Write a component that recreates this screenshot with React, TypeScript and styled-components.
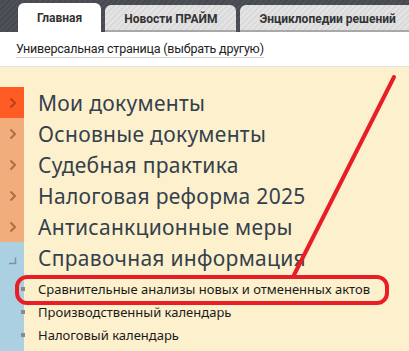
import React from 'react';
import styled, { createGlobalStyle } from 'styled-components';

const GlobalStyle = createGlobalStyle`
  html, body {
    margin: 0;
    padding: 0;
    height: 100%;
  }
  body {
    font-family: Roboto, "Noto Sans", sans-serif;
    background: #fdf0cc;
  }
  #root {
    min-height: 100%;
    display: flex;
    flex-direction: column;
  }
`;

const Page = styled.div`
  position: relative;
  flex: 1;
  display: flex;
  flex-direction: column;
  min-height: 351px;
  overflow: hidden;
`;

const TabBar = styled.div`
  height: 32px;
  display: flex;
  align-items: flex-end;
  gap: 4px;
  padding-left: 18px;
  background: repeating-linear-gradient(
    135deg,
    #4e5258 0px,
    #4e5258 2px,
    #464a50 2px,
    #464a50 4px
  );
  white-space: nowrap;
`;

const Tab = styled.div<{ active?: boolean }>`
  flex-shrink: 0;
  height: ${p => (p.active ? '29px' : '27px')};
  box-sizing: border-box;
  padding: 0 19px;
  display: flex;
  align-items: center;
  border-radius: 6px 6px 0 0;
  font-family: Roboto, sans-serif;
  font-weight: 700;
  font-size: 12px;
  color: #333;
  background: ${p =>
    p.active
      ? '#ffffff'
      : 'repeating-linear-gradient(135deg, #e4e4e4 0px, #e4e4e4 2px, #dadada 2px, #dadada 4px)'};
  box-shadow: ${p => (p.active ? 'none' : 'inset 0 -2px 0 #a8a8a8')};

  &:last-child {
    padding-right: 26px;
  }
`;

const PageSelector = styled.div`
  height: 35px;
  box-sizing: border-box;
  display: flex;
  align-items: center;
  padding-left: 16px;
  background: #ffffff;
  border-bottom: 1px solid #e2e2e2;
`;

const SelectorLink = styled.span`
  font-family: Roboto, sans-serif;
  font-size: 12.5px;
  letter-spacing: -0.2px;
  color: #222;
  border-bottom: 1px solid #d2d2d2;
  line-height: 16px;
  margin-top: 1px;
`;

const Content = styled.div`
  flex: 1;
  display: flex;
  flex-direction: column;
  padding-top: 20px;
  background: #fdf0cc;
`;

const Section = styled.div`
  display: flex;
  height: 31px;
`;

const Marker = styled.div<{ color: string }>`
  width: 24px;
  flex-shrink: 0;
  display: flex;
  align-items: center;
  justify-content: center;
  background: ${p => p.color};
  padding-left: 2px;
  box-sizing: border-box;
`;

const SectionTitle = styled.div`
  display: flex;
  align-items: center;
  padding-left: 14px;
  font-family: "Noto Sans", sans-serif;
  font-size: 21px;
  letter-spacing: 0.3px;
  color: #34404c;
  white-space: nowrap;
`;

const OpenGroup = styled.div`
  flex: 1;
  display: flex;
  flex-direction: column;
  background: linear-gradient(to right, #abd0e2 0, #abd0e2 24px, transparent 24px);
`;

const SubList = styled.ul`
  list-style: none;
  margin: 0;
  padding: 4px 0 0 21px;
`;

const SubItem = styled.li`
  display: flex;
  align-items: center;
  height: 23px;
  font-family: "Noto Sans", sans-serif;
  font-size: 13px;
  color: #1a1a1a;
  white-space: nowrap;
`;

const Bullet = styled.span`
  width: 4px;
  height: 4px;
  background: #8a8a8a;
  margin-right: 13px;
  flex-shrink: 0;
`;

const Annotation = styled.svg`
  position: absolute;
  left: 0;
  top: 0;
  pointer-events: none;
`;

const Chevron = () => (
  <svg width="8" height="12" viewBox="0 0 8 12">
    <polyline
      points="1.5,1.5 6,6 1.5,10.5"
      fill="none"
      stroke="rgba(110,45,15,0.5)"
      strokeWidth="2"
    />
  </svg>
);

const Corner = () => (
  <svg width="10" height="10" viewBox="0 0 10 10" style={{ marginTop: 4 }}>
    <polyline points="1,8.5 7.5,8.5 7.5,2.5" fill="none" stroke="#7f929c" strokeWidth="1.5" />
  </svg>
);

const sections = [
  { title: 'Мои документы', color: '#ff5b24' },
  { title: 'Основные документы', color: '#f2ad7c' },
  { title: 'Судебная практика', color: '#f2ad7c' },
  { title: 'Налоговая реформа 2025', color: '#f2ad7c' },
  { title: 'Антисанкционные меры', color: '#f2ad7c' },
];

const subItems = [
  'Сравнительные анализы новых и отмененных актов',
  'Производственный календарь',
  'Налоговый календарь',
];

export default function App() {
  return (
    <Page>
      <GlobalStyle />
      <TabBar>
        <Tab active>Главная</Tab>
        <Tab>Новости ПРАЙМ</Tab>
        <Tab>Энциклопедии решений</Tab>
      </TabBar>
      <PageSelector>
        <SelectorLink>Универсальная страница (выбрать другую)</SelectorLink>
      </PageSelector>
      <Content>
        {sections.map(s => (
          <Section key={s.title}>
            <Marker color={s.color}>
              <Chevron />
            </Marker>
            <SectionTitle>{s.title}</SectionTitle>
          </Section>
        ))}
        <OpenGroup>
          <Section>
            <Marker color="#abd0e2">
              <Corner />
            </Marker>
            <SectionTitle>Справочная информация</SectionTitle>
          </Section>
          <SubList>
            {subItems.map(t => (
              <SubItem key={t}>
                <Bullet />
                {t}
              </SubItem>
            ))}
          </SubList>
        </OpenGroup>
      </Content>
      <Annotation width="409" height="351" viewBox="0 0 409 351">
        <line x1="394" y1="77" x2="294" y2="275" stroke="#e81d25" strokeWidth="4" strokeLinecap="round" />
        <rect x="17" y="277" width="370" height="26" rx="10" fill="none" stroke="#e81d25" strokeWidth="4" />
      </Annotation>
    </Page>
  );
}
